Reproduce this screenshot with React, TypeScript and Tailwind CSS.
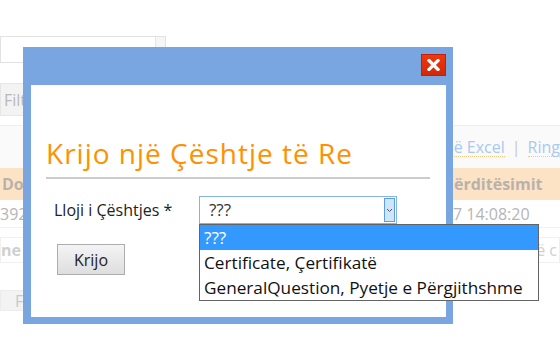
import React from "react";

export default function App() {
  return (
    <div
      className="relative w-[560px] h-[341px] overflow-hidden bg-white"
      style={{ fontFamily: '"Open Sans", "Noto Sans", sans-serif' }}
    >
      {/* background page (faded) */}
      <div className="flex flex-col pt-[36px]">
        <div className="flex h-[27px] w-[166px] border border-[#e2e2e2] bg-white">
          <div className="flex-1" />
          <div className="w-[10px] border-l border-[#e6e6e6] bg-[#f6f6f6]" />
        </div>
        <div className="mt-[20px] flex h-[33px] w-[120px] items-center border border-[#e6e6e6] bg-[#f3f3f3] pl-[3px] text-[16px] text-[#b8b8b8]">
          Filtro
        </div>
        <div className="mt-[9px] h-[1px] w-full bg-[#eeeeee]" />
        <div className="flex h-[42px] items-center justify-end bg-[#fafafa] text-[16px] text-[#a9c9f0]">
          <span className="border-b border-dotted border-[#f8c880] leading-[18px]">në Excel</span>
          <span className="mx-[7px] text-[#c8c8c8]">|</span>
          <span className="border-b border-dotted border-[#f8c880] leading-[18px]">Ring</span>
        </div>
        <div className="flex h-[32px] items-center justify-between bg-[#fde3c6] px-[2px] text-[16px] font-bold text-[#b9b2aa]">
          <span>Do</span>
          <span className="w-[104px] whitespace-nowrap">ërditësimit</span>
        </div>
        <div className="flex h-[28px] items-center justify-between border-b border-[#f0f0f0] text-[16px] text-[#b5b5b5]">
          <span>392</span>
          <span className="w-[107px] whitespace-nowrap">7 14:08:20</span>
        </div>
        <div className="mt-[9px] flex h-[26px] items-center justify-between border border-[#f0f0f0] text-[16px] text-[#d0d0d0]">
          <span className="font-bold">ne</span>
          <span className="pr-[2px]">ë c</span>
        </div>
        <div className="mt-[27px] flex h-[21px] w-[100px] items-center border border-[#ececec] bg-[#f3f3f3] pl-[14px] text-[16px] text-[#c8c8c8]">
          F
        </div>
      </div>

      {/* dialog */}
      <div className="absolute left-[23px] top-[47px] flex h-[277px] w-[430px] flex-col bg-[#79a6e0] pb-[7px] pl-[8px] pr-[7px]">
        <div className="flex h-[38px] shrink-0 items-start justify-end pt-[7px]">
          <div className="flex h-[22px] w-[25px] items-center justify-center border border-[#c41f08] bg-gradient-to-b from-[#f0380e] to-[#d22808]">
            <svg width="13" height="12" viewBox="0 0 13 12">
              <path d="M2 1.5 L11 10.5 M11 1.5 L2 10.5" stroke="white" strokeWidth="3.2" strokeLinecap="square" />
            </svg>
          </div>
        </div>
        <div className="flex flex-1 flex-col bg-white pl-[15px] pr-[16px]">
          <div className="mt-[51px] text-[28px] leading-[34px] tracking-[1px] text-[#ff9100] whitespace-nowrap">Krijo një Çështje të Re</div>
          <div className="mt-[7px] h-[2px] bg-[#cccccc]" />
          <div className="mt-[17px] flex items-start">
            <div className="mt-[4px] w-[153px] pl-[8px] text-[16px] leading-[20px] text-[#222]">Lloji i Çështjes *</div>
            <div className="relative">
              <div className="flex h-[28px] w-[198px] items-center border border-[#86b3e6] bg-white pl-[9px] text-[17px] text-[#333]">
                <span className="flex-1">???</span>
                <div className="mr-[1px] flex h-[24px] w-[11px] items-center justify-center border border-[#5a9ee3] bg-[#cfe6f8]">
                  <svg width="7" height="5" viewBox="0 0 7 5">
                    <path d="M1 1 L3.5 3.5 L6 1" fill="none" stroke="#555" strokeWidth="1" />
                  </svg>
                </div>
              </div>
              <div className="absolute left-0 top-[28px] z-10 w-[340px] border border-[#646464] bg-white text-[17.2px] leading-[25px] text-[#111]">
                <div className="bg-[#3399ff] pl-[4px] text-white">???</div>
                <div className="pl-[4px]">Certificate, Çertifikatë</div>
                <div className="pl-[4px]">GeneralQuestion, Pyetje e Përgjithshme</div>
              </div>
            </div>
          </div>
          <div className="mt-[20px] ml-[11px] flex h-[31px] w-[68px] items-center justify-center border border-[#adadad] bg-gradient-to-b from-[#f4f4f4] to-[#dedede] text-[16px] text-[#222]">
            Krijo
          </div>
        </div>
      </div>
    </div>
  );
}
